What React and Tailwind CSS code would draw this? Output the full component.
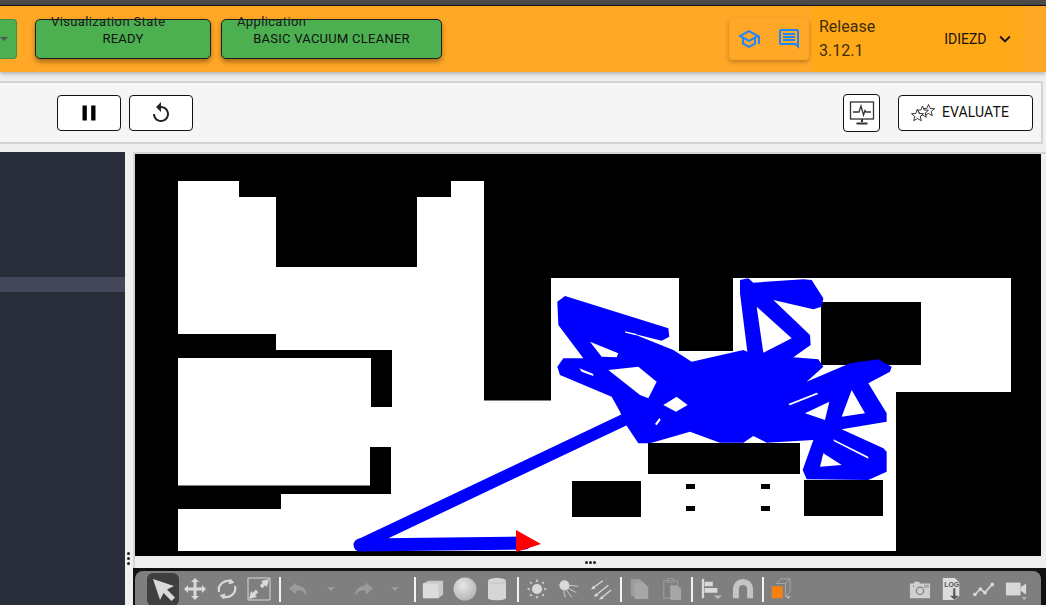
import { MdPause, MdReplay, MdOutlineSchool, MdOutlineComment, MdKeyboardArrowDown } from 'react-icons/md';

// map image: floor outline and obstacles, page coordinates minus canvas origin
const FLOOR = '178,181 239,181 239,197 276,197 276,267 417,267 417,197 451,197 451,181 484,181 484,400.5 551,400.5 551,278 679,278 679,351 733,351 733,278 1011,278 1011,392 896,392 896,551 178,551 178,509 281,509 281,494 391,494 391,447 370,447 370,485.5 178,485.5 178,358 371,358 371,407 392,407 392,350 276,350 276,334 178,334';

const OBSTACLES = [
  [821, 302, 100, 63],
  [648, 443, 152, 31],
  [572, 481, 69, 36],
  [804, 480, 79, 36],
  [686, 484, 9, 5],
  [761, 484, 9, 5],
  [686, 506, 9, 5],
  [761, 506, 9, 5],
];

// robot trail silhouette, in the 3x coordinates of the busy part of the map
const TRAIL_OUTLINE = '52,95 75,78 385,175 388,200 365,212 275,190 400,240 455,275 610,240 622,245 600,70 600,30 625,25 640,38 790,28 815,30 850,85 845,110 820,118 700,90 810,195 812,225 760,262 835,268 850,290 800,335 930,280 1015,268 1055,290 1050,305 985,340 1040,430 1040,455 905,478 1030,535 1040,545 1040,605 985,630 800,628 788,600 820,510 680,518 640,498 610,518 540,518 450,485 330,520 295,520 255,460 240,425 215,380 60,315 52,290 70,265 130,265 55,165';

const TRAIL_HOLES = [
  '150,215 235,250 230,262 185,260',
  '205,300 295,290 350,335 325,385 300,375',
  '370,405 410,380 443,405 408,425',
  '650,110 755,205 670,248',
  '795,430 868,395 855,450',
  '935,360 975,430 905,440',
  '850,550 905,585 840,590',
  '880,508 985,560 985,566 882,514',
  '745,402 830,368 835,372 750,406',
  '118,295 160,312 160,318 125,305',
  '255,184 290,192 288,196 256,188',
  '345,462 358,444 362,450 350,466',
];

function MapView() {
  return (
    <svg viewBox="135 154 906 402" className="block h-[402px] w-[906px]">
      <rect x="135" y="154" width="906" height="402" fill="#000" />
      <polygon points={FLOOR} fill="#fff" />
      {OBSTACLES.map(([x, y, w, h]) => (
        <rect key={`${x}-${y}`} x={x} y={y} width={w} height={h} fill="#000" />
      ))}
      <g transform="translate(540 270) scale(0.33333)">
        <polygon points={TRAIL_OUTLINE} fill="#0000ff" />
        {TRAIL_HOLES.map((pts) => (
          <polygon key={pts} points={pts} fill="#fff" />
        ))}
      </g>
      <polyline points="360,545 628,418" fill="none" stroke="#0000ff" strokeWidth="12" strokeLinecap="round" />
      <polyline points="360,545 525,543" fill="none" stroke="#0000ff" strokeWidth="13" strokeLinecap="round" />
      <polygon points="516,530 541,544 516,552" fill="#ff0000" />
    </svg>
  );
}

function StarsIcon() {
  const star = 'M0,-6 L1.7,-2 L6,-1.8 L2.7,1 L3.8,5.2 L0,3 L-3.8,5.2 L-2.7,1 L-6,-1.8 L-1.7,-2 Z';
  return (
    <svg viewBox="0 0 24 18" className="h-[18px] w-[24px]" fill="#fff" stroke="#222" strokeWidth="0.9">
      <path d={star} transform="translate(17.5 6.5)" />
      <path d={star} transform="translate(11.5 8)" />
      <path d={star} transform="translate(6.5 11.5)" />
    </svg>
  );
}

function MonitorIcon() {
  return (
    <svg viewBox="0 0 26 26" className="h-[26px] w-[26px]" fill="none" stroke="#333" strokeWidth="1.3">
      <rect x="1.5" y="2" width="23" height="17" />
      <path d="M4 12h6l2-6 2.5 9 1.5-4.500 1 1.500h5" />
      <path d="M13 19v3M7.500 23.500h11" strokeWidth="2" />
    </svg>
  );
}

const LIGHT = '#d9d9d9';
const DIM = '#9c9c9c';

const TOOL_ICONS = {
  select: (
    <path d="M2 2 L23 9 L16 12.500 L24 20.500 L20.500 24 L12.500 16 L9 23 Z" fill={LIGHT} />
  ),
  move: (
    <path d="M12 1l4 4h-2.500v5.500H19V8l4 4-4 4v-2.500h-5.500V19H16l-4 4-4-4h2.500v-5.500H5V16l-4-4 4-4v2.500h5.500V5H8z" fill={LIGHT} />
  ),
  rotate: (
    <g fill="none" stroke={LIGHT} strokeWidth="2.200">
      <path d="M4 15a9 9 0 0 1 13-10" />
      <path d="M20 9a9 9 0 0 1-13 10" />
      <path d="M15 2l4 3.500-5 1.500zM9 22l-4-3.500 5-1.500z" fill={LIGHT} strokeWidth="0.800" />
    </g>
  ),
  scale: (
    <g>
      <path d="M1 1h22v22H1z" fill="none" stroke={LIGHT} strokeWidth="1" />
      <path d="M2 22l8-2-6-6zM22 2l-8 2 6 6z" fill={LIGHT} />
      <path d="M6 18l4-4M18 6l-4 4" stroke={LIGHT} strokeWidth="3.500" />
    </g>
  ),
  undo: <path d="M9 5L1 11.500 9 18v-4c5-1 9 0 11 6 1-7-3-11-11-12z" fill={DIM} />,
  redo: <path d="M15 5l8 6.500L15 18v-4c-5-1-9 0-11 6-1-7 3-11 11-12z" fill={DIM} />,
  box: (
    <g>
      <path d="M1 6l6-3h16v15l-5 4H1z" fill="#c9c9c9" />
      <path d="M1 6h17v16H1z" fill="#dcdcdc" />
    </g>
  ),
  sphere: (
    <g>
      <defs>
        <radialGradient id="sphereShade" cx="40%" cy="35%" r="70%">
          <stop offset="0%" stopColor="#e6e6e6" />
          <stop offset="100%" stopColor="#b4b4b4" />
        </radialGradient>
      </defs>
      <circle cx="12" cy="12" r="11.500" fill="url(#sphereShade)" />
    </g>
  ),
  cylinder: (
    <g>
      <path d="M3 4c0-4 18-4 18 0v17c0 3-18 3-18 0z" fill="#d6d6d6" />
      <path d="M3 4c0 3 18 3 18 0" fill="none" stroke="#c2c2c2" />
    </g>
  ),
  sun: (
    <g fill={LIGHT}>
      <circle cx="12" cy="12" r="5.500" />
      <path d="M12 1l1.500 3h-3zM12 23l-1.500-3h3zM1 12l3-1.500v3zM23 12l-3 1.500v-3zM4 4l3 1-2 2zM20 20l-3-1 2-2zM20 4l-1 3-2-2zM4 20l1-3 2 2z" />
    </g>
  ),
  spot: (
    <g fill={LIGHT} stroke={LIGHT}>
      <circle cx="7" cy="8" r="5.500" stroke="none" />
      <path d="M12 8l10 1M11 11l9 5M9 13l6 8M6 14l2 7" strokeWidth="0.900" fill="none" />
    </g>
  ),
  directional: (
    <g stroke={LIGHT} fill={LIGHT} strokeWidth="1.400">
      <path d="M14 3L3 11M20 8L6 19M23 13l-11 9" fill="none" />
      <path d="M1 12.500l5-1-2.500-3zM4 20.500l5-1-2.500-3zM10 23.500l5-1-2.500-3z" stroke="none" />
    </g>
  ),
  copy: (
    <g>
      <path d="M2 1h10l4 4v15H2z" fill={DIM} />
      <path d="M6 5h10l5 5v13H6z" fill="#a6a6a6" />
    </g>
  ),
  paste: (
    <g>
      <path d="M3 3h15v19H3z" fill="none" stroke={DIM} strokeWidth="1.200" />
      <path d="M7 0.500h7v4H7z" fill="none" stroke={DIM} />
      <path d="M10 8h8l4 4v12H10z" fill="#a6a6a6" />
    </g>
  ),
  align: (
    <g fill={LIGHT}>
      <path d="M2 1h2.500v21H2z" />
      <path d="M5 4h9v5H5zM5 11h14v5H5z" />
      <path d="M15 19h9l-4.500 4z" fill="#bdbdbd" />
    </g>
  ),
  magnet: (
    <path d="M1 22V12a11 11 0 0 1 22 0v10h-6.500V12a4.500 4.500 0 0 0-9 0v10z" fill="#c4c4c4" />
  ),
  view: (
    <g>
      <path d="M8 6L13 1h10v14l-5 5" fill="none" stroke="#b5b5b5" strokeWidth="0.800" />
      <path d="M8 6h10M18 6l5-5M18 6v14" stroke="#b5b5b5" strokeWidth="0.800" />
      <path d="M3 9h12v13H3z" fill="#f5820f" />
      <path d="M18 20h6l-3 3z" fill="#bdbdbd" />
    </g>
  ),
  camera: (
    <g>
      <path d="M1 6h4l1-2h5l1 2h11v16H1z" fill="#cfcfcf" />
      <circle cx="12" cy="14" r="4" fill="none" stroke="#7f7f7f" strokeWidth="1.300" />
      <path d="M17 8h4v2h-4z" fill="none" stroke="#7f7f7f" strokeWidth="0.700" />
      <circle cx="5" cy="9" r="0.800" fill="#7f7f7f" />
    </g>
  ),
  log: (
    <g>
      <path d="M2 0h13l5 5v14l-6 5H2z" fill="#dcdcdc" />
      <text x="3.500" y="9.500" fontSize="7.500" fontFamily="Liberation Sans, sans-serif" fontWeight="700" fill="#555">LOG</text>
      <path d="M16 11v8h4l-5.500 5L9 19h4v-8z" fill="#555" stroke="#dcdcdc" strokeWidth="0.700" />
    </g>
  ),
  plot: (
    <g>
      <path d="M2 18l6-6 5 4 8-9" fill="none" stroke={LIGHT} strokeWidth="1.800" />
      <circle cx="2" cy="18" r="2" fill={LIGHT} />
      <circle cx="8" cy="12" r="2" fill={LIGHT} />
      <circle cx="13" cy="16" r="2" fill={LIGHT} />
      <circle cx="21" cy="7" r="2" fill={LIGHT} />
    </g>
  ),
  video: (
    <g fill={LIGHT}>
      <path d="M1 5h16v14H1z" />
      <path d="M17 10l6-4v12l-6-4z" />
      <path d="M18 21h6l-3 3z" fill="#bdbdbd" />
    </g>
  ),
};

function Tool({ name, active, small }) {
  return (
    <div className={`flex h-[33px] w-[32px] shrink-0 items-center justify-center rounded-md ${active ? 'bg-[#3f3f3f]' : ''}`}>
      <svg viewBox="0 0 24 24" className={small ? 'h-[22px] w-[22px]' : 'h-[24px] w-[24px]'}>
        {TOOL_ICONS[name]}
      </svg>
    </div>
  );
}

function Caret() {
  return (
    <div className="flex h-[33px] w-[32px] shrink-0 items-center justify-center">
      <div className="h-0 w-0 border-x-[4px] border-t-[4px] border-x-transparent border-t-[#9c9c9c]" />
    </div>
  );
}

function Sep({ className }) {
  return <div className={`h-[25px] w-[2px] shrink-0 bg-[#f2f2f2] ${className}`} />;
}

function GzToolbar() {
  return (
    <div className="flex h-[37px] items-start bg-[#0f1114] pl-[2px] pt-[3px]">
      <div className="flex h-[36px] w-[906px] items-center rounded-t-lg bg-[#7f7f7f] pl-[12px] pr-[9px]">
        <Tool name="select" active />
        <Tool name="move" />
        <Tool name="rotate" />
        <Tool name="scale" />
        <Sep className="ml-[4px] mr-[2px]" />
        <Tool name="undo" small />
        <Caret />
        <Tool name="redo" small />
        <Caret />
        <Sep className="ml-[3px] mr-[1px]" />
        <Tool name="box" small />
        <Tool name="sphere" />
        <Tool name="cylinder" />
        <Sep className="ml-[4px] mr-[2px]" />
        <Tool name="sun" small />
        <Tool name="spot" small />
        <Tool name="directional" small />
        <Sep className="ml-[3px] mr-[2px]" />
        <Tool name="copy" small />
        <Tool name="paste" small />
        <Sep className="ml-[3px] mr-[2px]" />
        <Tool name="align" small />
        <Tool name="magnet" small />
        <Sep className="ml-[3px]" />
        <Tool name="view" small />
        <div className="ml-auto flex">
          <Tool name="camera" small />
          <Tool name="log" small />
          <Tool name="plot" small />
          <Tool name="video" small />
        </div>
      </div>
    </div>
  );
}

function StateButton({ label, value, className }) {
  return (
    <div className={`relative flex h-[40px] items-center justify-center rounded-[5px] border border-[#1c1c1c] bg-[#4caf50] text-[13px] tracking-[0.25px] text-[#111] shadow-[0_3px_5px_rgba(0,0,0,0.35)] ${className}`}>
      {value}
      <span className="absolute left-[15px] top-[-8px] text-[13px] tracking-[0.36px] text-[#1a1a1a]">{label}</span>
    </div>
  );
}

export default function App() {
  return (
    <div className="flex h-[605px] w-[1046px] flex-col overflow-hidden bg-[#efefef] font-['Roboto',sans-serif]">
      <div className="h-[5px] shrink-0 bg-[#4a4a4a]" />
      <div className="h-[1px] shrink-0 bg-[#111]" />

      <header className="z-10 flex h-[66px] shrink-0 items-center bg-[#ffa726] shadow-[0_2px_4px_rgba(0,0,0,0.25)]">
        <div className="flex h-[40px] w-[17px] items-center rounded-r-[4px] border-y border-r border-[#3f9142] bg-[#4caf50]">
          <div className="h-0 w-0 border-x-[4px] border-t-[4px] border-x-transparent border-t-[#555]" />
        </div>
        <StateButton label="Visualization State" value="READY" className="ml-[18px] w-[176px]" />
        <StateButton label="Application" value="BASIC VACUUM CLEANER" className="ml-[10px] w-[221px]" />
        <div className="ml-[287px] flex h-[42px] w-[80px] items-center justify-center gap-[16px] rounded-[4px] shadow-[0_2px_4px_rgba(0,0,0,0.25)]">
          <MdOutlineSchool className="text-[24px] text-[#1e86ff]" />
          <MdOutlineComment className="text-[24px] text-[#1e86ff]" />
        </div>
        <div className="ml-[3px] flex h-full w-[211px] items-center bg-[#ffa918] pl-[7px]">
          <div className="text-[16px] leading-[24px] text-[#3d2d0a]">
            <div>Release</div>
            <div>3.12.1</div>
          </div>
          <div className="ml-[69px] text-[14px] text-[#1a1408]">IDIEZD</div>
          <MdKeyboardArrowDown className="ml-[7px] text-[22px] text-[#1a1408]" />
        </div>
      </header>

      <div className="mr-[3px] mt-[9px] flex h-[63px] shrink-0 items-center border-2 border-l-0 border-[#d4d4d4] bg-[#f5f5f5] pl-[57px] pr-[8px]">
        <button className="flex h-[36px] w-[64px] items-center justify-center rounded-[4px] border border-[#111] bg-white">
          <MdPause className="text-[26px] text-black" />
        </button>
        <button className="ml-[8px] flex h-[36px] w-[64px] items-center justify-center rounded-[4px] border border-[#111] bg-white">
          <MdReplay className="text-[24px] text-[#222]" />
        </button>
        <button className="ml-auto flex h-[38px] w-[37px] items-center justify-center rounded-[4px] border border-[#111] bg-white">
          <MonitorIcon />
        </button>
        <button className="ml-[18px] flex h-[36px] w-[135px] items-center rounded-[4px] border border-[#111] bg-white pl-[12px] text-[14px] tracking-[0.1px] text-[#111]">
          <StarsIcon />
          <span className="ml-[7px]">EVALUATE</span>
        </button>
      </div>

      <div className="mt-[8px] flex min-h-0 flex-1">
        <aside className="w-[125px] shrink-0 bg-[#2a2d3a] pt-[125px]">
          <div className="h-[15px] bg-[#44465a]" />
        </aside>
        <div className="relative w-[8px] shrink-0">
          <div className="absolute bottom-[40px] left-[2px] flex flex-col gap-[2px]">
            <span className="h-[3px] w-[3px] rounded-full bg-[#222]" />
            <span className="h-[3px] w-[3px] rounded-full bg-[#222]" />
            <span className="h-[3px] w-[3px] rounded-full bg-[#222]" />
          </div>
        </div>
        <div className="flex w-[913px] shrink-0 flex-col">
          <div className="border-l-2 border-t-2 border-[#d4d4d4] pr-[5px]">
            <MapView />
          </div>
          <div className="flex h-[12px] items-center justify-center gap-[1px] border-l-2 border-[#d4d4d4]">
            <span className="h-[3px] w-[3px] rounded-full bg-[#222]" />
            <span className="h-[3px] w-[3px] rounded-full bg-[#222]" />
            <span className="h-[3px] w-[3px] rounded-full bg-[#222]" />
          </div>
          <GzToolbar />
        </div>
      </div>
    </div>
  );
}
